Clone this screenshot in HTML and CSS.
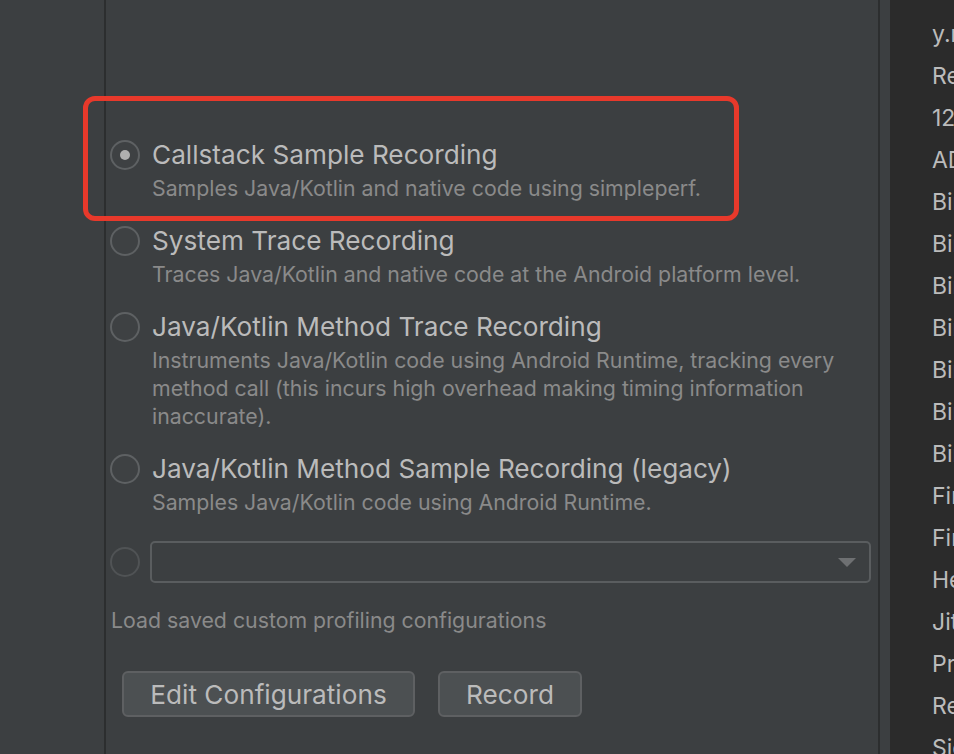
FILE: index.html
```html
<!DOCTYPE html>
<html lang="en">
<head>
<meta charset="utf-8">
<title>Profiler recording options</title>
<link rel="stylesheet" href="styles.css">
</head>
<body>
<div class="app">
  <aside class="side"></aside>
  <div class="divider"></div>
  <main class="main">
    <div class="options">
      <div class="option">
        <span class="radio checked"></span>
        <div class="text">
          <div class="title">Callstack Sample Recording</div>
          <div class="desc">Samples Java/Kotlin and native code using simpleperf.</div>
        </div>
      </div>
      <div class="option">
        <span class="radio"></span>
        <div class="text">
          <div class="title">System Trace Recording</div>
          <div class="desc">Traces Java/Kotlin and native code at the Android platform level.</div>
        </div>
      </div>
      <div class="option">
        <span class="radio"></span>
        <div class="text">
          <div class="title">Java/Kotlin Method Trace Recording</div>
          <div class="desc">Instruments Java/Kotlin code using Android Runtime, tracking every method call (this incurs high overhead making timing information inaccurate).</div>
        </div>
      </div>
      <div class="option">
        <span class="radio"></span>
        <div class="text">
          <div class="title">Java/Kotlin Method Sample Recording (legacy)</div>
          <div class="desc">Samples Java/Kotlin code using Android Runtime.</div>
        </div>
      </div>
    </div>
    <div class="custom">
      <span class="radio disabled"></span>
      <div class="combo"><span class="arrow"></span></div>
    </div>
    <p class="hint">Load saved custom profiling configurations</p>
    <div class="buttons">
      <button class="btn btn-edit">Edit Configurations</button>
      <button class="btn btn-record">Record</button>
    </div>
  </main>
  <div class="divider"></div>
  <div class="gutter"></div>
  <aside class="threads">
    <ul class="thread-list">
      <li>y.myapplication</li>
      <li>RenderThread</li>
      <li>1234</li>
      <li>ADB-JDWP Connection Control Thread</li>
      <li>Binder:1234_1</li>
      <li>Binder:1234_2</li>
      <li>Binder:1234_3</li>
      <li>Binder:1234_4</li>
      <li>Binder:1234_5</li>
      <li>Binder:1234_6</li>
      <li>Binder:1234_7</li>
      <li>FinalizerDaemon</li>
      <li>FinalizerWatchdogDaemon</li>
      <li>HeapTaskDaemon</li>
      <li>Jit thread pool</li>
      <li>Profile Saver</li>
      <li>ReferenceQueueDaemon</li>
      <li>Signal Catcher</li>
    </ul>
  </aside>
  <div class="highlight"></div>
</div>
</body>
</html>
```
FILE: styles.css
```css
* { box-sizing: border-box; }

html, body {
  margin: 0;
  padding: 0;
  background: #3c3f41;
}

body {
  width: 954px;
  height: 754px;
  overflow: hidden;
  font-family: Inter, "Noto Sans", "Liberation Sans", sans-serif;
  color: #bbbbbb;
}

.app {
  position: relative;
  display: flex;
  width: 954px;
  height: 754px;
}

.side {
  width: 104px;
  flex: none;
  background: #3c3f41;
}

.divider {
  width: 2px;
  flex: none;
  background: #2c2e2f;
}

.main {
  width: 772px;
  flex: none;
  padding: 139px 7px 0 4px;
  background: #3c3f41;
}

.options {
  display: flex;
  flex-direction: column;
  gap: 23px;
}

.option {
  display: grid;
  grid-template-columns: 30px 1fr;
  column-gap: 12px;
  align-items: start;
}

.radio {
  display: flex;
  align-items: center;
  justify-content: center;
  width: 30px;
  height: 30px;
  margin-top: 1px;
  border: 2px solid #5e6163;
  border-radius: 50%;
  background: #3e4143;
}

.radio.checked::after {
  content: "";
  width: 10px;
  height: 10px;
  border-radius: 50%;
  background: #afafaf;
}

.radio.disabled {
  border-color: #505355;
  background: #3c3f41;
  margin-top: 0;
}

.title {
  font-size: 26.2px;
  line-height: 32px;
  color: #bbbbbb;
}

.desc {
  margin-top: 3px;
  font-size: 21.3px;
  line-height: 28px;
  color: #8a8a8a;
}

.custom {
  display: flex;
  align-items: center;
  gap: 10px;
  margin-top: 25px;
}

.combo {
  position: relative;
  flex: 1;
  height: 42px;
  border: 2px solid #5a5d5f;
  border-radius: 5px;
}

.arrow {
  position: absolute;
  right: 13px;
  top: 15px;
  width: 0;
  height: 0;
  border-left: 9px solid transparent;
  border-right: 9px solid transparent;
  border-top: 9px solid #6e7072;
}

.hint {
  margin: 23px 0 0 1px;
  font-size: 21.3px;
  line-height: 28px;
  color: #8a8a8a;
}

.buttons {
  display: flex;
  gap: 23px;
  margin: 37px 0 0 12px;
}

.btn {
  height: 46px;
  padding: 2px 0 0;
  border: 2px solid #5e6062;
  border-radius: 6px;
  background: #4c5052;
  color: #bbbbbb;
  font-family: Inter, "Noto Sans", "Liberation Sans", sans-serif;
  font-size: 26.2px;
  line-height: 40px;
}

.btn-edit { width: 293px; }
.btn-record { width: 144px; }

.gutter {
  width: 10px;
  flex: none;
  background: #3c3f41;
}

.threads {
  flex: 1;
  background: #2b2b2b;
  overflow: hidden;
}

.thread-list {
  list-style: none;
  margin: 0;
  padding: 13px 0 0 42px;
  white-space: nowrap;
}

.thread-list li {
  font-size: 23px;
  line-height: 42px;
  color: #bbbbbb;
}

.highlight {
  position: absolute;
  left: 83px;
  top: 96px;
  width: 656px;
  height: 125px;
  border: 5px solid #e8392b;
  border-radius: 12px;
  pointer-events: none;
}
```
